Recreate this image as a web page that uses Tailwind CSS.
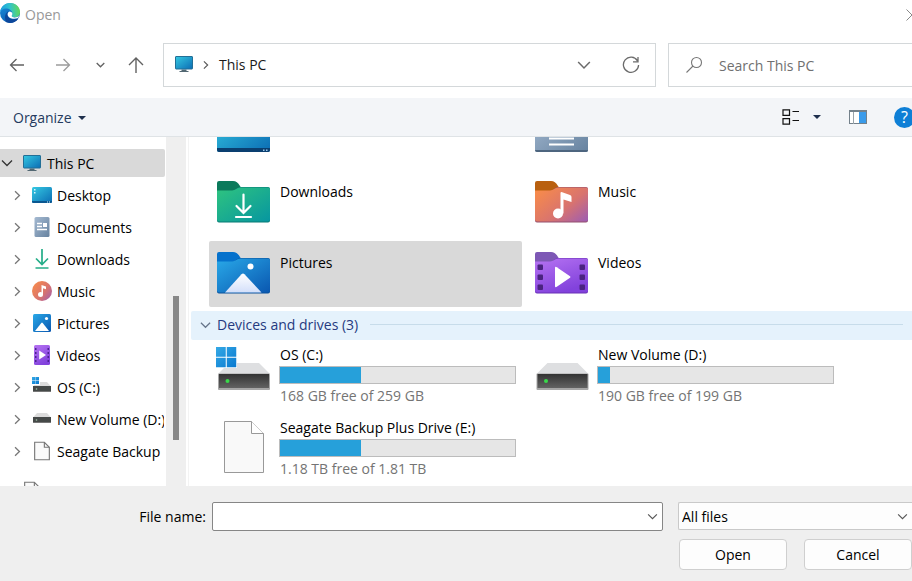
<!DOCTYPE html>
<html lang="en">
<head>
<meta charset="utf-8">
<meta name="viewport" content="width=device-width, initial-scale=1">
<title>Open</title>
<script src="https://cdn.jsdelivr.net/npm/@tailwindcss/browser@4"></script>
</head>
<body class="flex h-screen flex-col overflow-hidden bg-white font-['Open_Sans','Noto_Sans',sans-serif] text-sm text-black">

<!-- Shared icon definitions -->
<svg class="absolute size-0" aria-hidden="true">
  <defs>
    <linearGradient id="gScreen" x1="0" y1="0" x2="1" y2="1"><stop offset="0" stop-color="#35c9e2"/><stop offset="1" stop-color="#0b6cb4"/></linearGradient>
    <linearGradient id="gBlue" x1="0" y1="0" x2="1" y2="1"><stop offset="0" stop-color="#29a9e8"/><stop offset="1" stop-color="#0a57b0"/></linearGradient>
    <linearGradient id="gGreen" x1="0" y1="0" x2="1" y2="1"><stop offset="0" stop-color="#2fc47f"/><stop offset="1" stop-color="#0796a0"/></linearGradient>
    <linearGradient id="gMusic" x1="0" y1="0.2" x2="1" y2="1"><stop offset="0" stop-color="#f68a4c"/><stop offset="0.55" stop-color="#d8736f"/><stop offset="1" stop-color="#9c5cb4"/></linearGradient>
    <linearGradient id="gVideo" x1="0" y1="0" x2="0.5" y2="1"><stop offset="0" stop-color="#b673f2"/><stop offset="1" stop-color="#8242dc"/></linearGradient>
    <linearGradient id="gDoc" x1="0" y1="0" x2="1" y2="1"><stop offset="0" stop-color="#a5bad2"/><stop offset="1" stop-color="#66829f"/></linearGradient>
    <linearGradient id="gHill" x1="0" y1="0" x2="0" y2="1"><stop offset="0" stop-color="#ffffff"/><stop offset="1" stop-color="#d3dffa"/></linearGradient>
    <linearGradient id="gDrive" x1="0" y1="0" x2="0" y2="1"><stop offset="0" stop-color="#333333"/><stop offset="1" stop-color="#626262"/></linearGradient>
    <linearGradient id="gWin" x1="0" y1="0" x2="1" y2="1"><stop offset="0" stop-color="#35a9e6"/><stop offset="1" stop-color="#0878cf"/></linearGradient>
    <linearGradient id="gEdgeTop" x1="0" y1="0.6" x2="1" y2="0.5"><stop offset="0" stop-color="#1a9be0"/><stop offset="0.5" stop-color="#2fc2cf"/><stop offset="1" stop-color="#63d957"/></linearGradient>
    <linearGradient id="gEdgeLow" x1="0" y1="0" x2="0.6" y2="1"><stop offset="0" stop-color="#1a8fdc"/><stop offset="1" stop-color="#0c5cb0"/></linearGradient>
    <symbol id="chevRight" viewBox="0 0 8 12"><path d="M1.2 1.2 6.2 6 1.2 10.8" fill="none" stroke="currentColor" stroke-width="1.5"/></symbol>
    <symbol id="chevDown" viewBox="0 0 12 8"><path d="M1 1.5 6 6.5 11 1.5" fill="none" stroke="currentColor" stroke-width="1.3"/></symbol>
    <symbol id="monitor" viewBox="0 0 18 16"><path d="M6.500 13.500h5v1.500h2v1h-9v-1h2z" fill="#536873"/><rect x="0.500" y="0.500" width="17" height="12.500" rx="0.500" fill="url(#gScreen)" stroke="#236f96"/></symbol>
    <symbol id="drive" viewBox="0 0 52 27"><path d="M11 0h30l11 11H0z" fill="#dedfe1"/><rect y="10.500" width="52" height="16.500" rx="1" fill="#a6a6a6"/><rect x="1" y="11" width="50" height="14" fill="url(#gDrive)"/><circle cx="9.500" cy="18" r="2" fill="#38d94a"/></symbol>
    <symbol id="smallDrive" viewBox="0 0 18 11"><path d="M4 0h10l4 4.500H0z" fill="#dcdcdc"/><rect y="4" width="18" height="6" fill="#454948"/><rect y="9" width="18" height="1" fill="#777"/><circle cx="3.500" cy="7" r="0.800" fill="#a7c7ad"/></symbol>
    <symbol id="windows" viewBox="0 0 20 20"><path d="M0 0h9.500v9.500H0zM10.500 0H20v9.500h-9.500zM0 10.500h9.500V20H0zM10.500 10.500H20V20h-9.500z" fill="url(#gWin)"/></symbol>
    <symbol id="page" viewBox="0 0 40 52"><path d="M.5.5h27l12 12v39H.5z" fill="#f9f9f9" stroke="#999"/><path d="M27.500.5v12h12" fill="#fff" stroke="#999"/></symbol>
    <symbol id="smallPage" viewBox="0 0 17 20"><path d="M.7.7h10.300l5.300 5.300v13.300H.7z" fill="#fafafa" stroke="#777" stroke-width="1.200"/><path d="M11 .7V6h5.300" fill="none" stroke="#777" stroke-width="1.200"/></symbol>
  </defs>
</svg>

<header>
  <div class="flex h-[30px] items-center justify-between overflow-hidden">
    <div class="flex items-center gap-[5px] text-[#999]">
      <svg class="mb-1 size-5" viewBox="0 0 20 20" aria-hidden="true">
        <circle cx="10" cy="10" r="10" fill="url(#gEdgeLow)"/>
        <path d="M0 9.500C.5 4 5 0 10 0c6 0 10 4 10 9 0 3.300-2.300 5.300-5.300 5.300-2 0-3-.6-3-1.300 0-.6.700-1 .700-2.300C12.400 7.500 9 5.500 6 5.500 3 5.500.8 7.300 0 9.500z" fill="url(#gEdgeTop)"/>
        <path d="M6.500 19.300C4 16 4.500 10 8.800 8c-1.200 1-1.500 2.500-1.300 4 .5 3.500 5 5.500 10.800 3.500-2.300 4-7 5.500-11.800 3.800z" fill="#0c479b"/>
        <path d="M9.500 8.500c1.600 0 2.900 1 2.900 2.200 0 1.300-.7 1.700-.7 2.300 0 .9 1.300 1.400 3 1.400 1.700 0 3.200-.5 4.300-1.700-.2.900-.5 1.700-.9 2.400-4.800 1.800-9.800.2-10.400-3.300-.2-1.400.5-2.800 1.800-3.300z" fill="#fff"/>
      </svg>
      <h1>Open</h1>
    </div>
    <button class="-mr-[6px] text-[#888]" aria-label="Close">
      <svg class="size-3" viewBox="0 0 12 12" fill="none" stroke="currentColor"><path d="M.5.500 11.500 11.500M11.500.5.5 11.500"/></svg>
    </button>
  </div>

  <div class="flex items-center pt-[13px] pb-[11px]">
    <nav class="flex w-[163px] shrink-0 items-center text-[#626262]" aria-label="History">
      <button class="flex w-[34px] justify-center" aria-label="Back"><svg class="h-3.5 w-4" viewBox="0 0 16 14" fill="none" stroke="currentColor" stroke-width="1.300"><path d="M15 7H1.500M7.500 1 1.500 7l6 6"/></svg></button>
      <button class="flex w-[58px] justify-center text-[#9c9c9c]" aria-label="Forward"><svg class="h-3.5 w-4" viewBox="0 0 16 14" fill="none" stroke="currentColor" stroke-width="1.300"><path d="M1 7h13.500M8.500 1l6 6-6 6"/></svg></button>
      <button class="flex w-4 justify-center" aria-label="Recent locations"><svg class="h-1.5 w-[9px]" viewBox="0 0 9 6"><path d="M.7 1 4.500 4.800 8.300 1" fill="none" stroke="currentColor" stroke-width="1.300"/></svg></button>
      <button class="flex w-[55px] justify-center" aria-label="Up"><svg class="size-4" viewBox="0 0 16 16" fill="none" stroke="currentColor" stroke-width="1.400"><path d="M8 16V1M1 8l7-7 7 7"/></svg></button>
    </nav>
    <div class="flex h-11 flex-1 items-center border border-[#d4d8da] pr-[15px] pl-[11px]">
      <svg class="mb-[2px] h-4 w-[18px]" aria-hidden="true"><use href="#monitor"/></svg>
      <svg class="mx-2.5 h-2.5 w-1.5 text-[#555]" aria-hidden="true"><use href="#chevRight"/></svg>
      <button class="flex-1 text-left text-[#1a1a1a]">This PC</button>
      <button class="mr-[31px] text-[#6b6b6b]" aria-label="Previous locations"><svg class="h-2.5 w-3.5"><use href="#chevDown"/></svg></button>
      <button class="text-[#6b6b6b]" aria-label="Refresh"><svg class="size-[18px]" viewBox="0 0 18 18" fill="none" stroke="currentColor" stroke-width="1.300"><path d="M15.500 4.800A7.600 7.600 0 1 0 16.600 9M16 1v4.800h-5"/></svg></button>
    </div>
    <label class="ml-3 flex h-11 w-[244px] shrink-0 items-center gap-4 border border-r-0 border-[#d4d8da] pl-4 text-[#777]">
      <svg class="size-[18px] shrink-0" viewBox="0 0 18 18" fill="none" stroke="currentColor" stroke-width="1.100" aria-hidden="true"><circle cx="11.500" cy="6.500" r="5"/><path d="M8 10 1.500 16.500"/></svg>
      <input class="w-full min-w-0 pt-0.5 outline-none placeholder:text-[#707070]" type="search" placeholder="Search This PC" aria-label="Search This PC">
    </label>
  </div>

  <div class="flex h-[39px] items-center overflow-hidden border-b border-[#dfe3e6] bg-[#f3f5f8] pl-[13px]">
    <button class="flex items-center gap-1.5 pt-0.5 text-[#243a5e]">Organize <svg class="h-1 w-2" viewBox="0 0 8 4"><path d="M0 0h8L4 4z" fill="#1e2f4d"/></svg></button>
    <div class="-mr-[3px] ml-auto flex items-center">
      <button class="flex items-center gap-3.5" aria-label="Change view">
        <svg class="h-4 w-[17px]" viewBox="0 0 17 16" fill="none" stroke="#111" stroke-width="1.200"><path d="M1 .8h6.500v5.600H1zM1 9.600h6.500v5.600H1zM10.500 2.500H17M10.500 11.500H17"/></svg>
        <svg class="h-1 w-2" viewBox="0 0 8 4"><path d="M0 0h8L4 4z" fill="#1e2f4d"/></svg>
      </button>
      <button class="ml-7" aria-label="Show the preview pane">
        <svg class="h-3.5 w-[18px]" viewBox="0 0 18 14"><rect x=".5" y=".5" width="17" height="13" fill="#fff" stroke="#74818b"/><path d="M0 0h18v2H0z" fill="#74818b"/><path d="M4.500 2v12" stroke="#9aa4ab"/><path d="M10 2h7v11h-7z" fill="#3a9bea"/></svg>
      </button>
      <button class="ml-[27px] flex size-[21px] items-center justify-center rounded-full bg-[#0e7fd6] text-base leading-none text-white" aria-label="Help">?</button>
    </div>
  </div>
</header>

<main class="flex min-h-0 flex-1">
  <nav class="w-[166px] shrink-0 overflow-hidden pt-3" aria-label="Folders">
    <ul class="flex flex-col gap-1 whitespace-nowrap">
      <li><a href="#" class="mr-px flex h-7 items-center rounded-r-xs bg-[#d9d9d9] pl-[1px]"><svg class="mr-[10px] h-2 w-3 text-[#333]"><use href="#chevDown"/></svg><svg class="mr-1.5 h-4 w-[18px]"><use href="#monitor"/></svg><span class="pt-0.5">This PC</span></a></li>
      <li><a href="#" class="flex h-7 items-center pl-3.5"><svg class="mr-[11px] h-[11px] w-[7px] shrink-0 text-[#777]"><use href="#chevRight"/></svg><svg class="mr-[5px] size-5 shrink-0" viewBox="0 0 20 20"><rect y="2" width="20" height="16" rx="1.500" fill="url(#gScreen)"/><path d="M0 16h20v.5a1.500 1.500 0 0 1-1.500 1.500h-17A1.500 1.500 0 0 1 0 16.500z" fill="#0a5790"/><path d="M2 4h1.500v1.500H2zM2 7h1.500v1.500H2zM15 16.500h1v1h-1zM17 16.500h1v1h-1z" fill="#d9f6fb"/></svg><span class="pt-0.5">Desktop</span></a></li>
      <li><a href="#" class="flex h-7 items-center pl-3.5"><svg class="mr-[11px] h-[11px] w-[7px] shrink-0 text-[#777]"><use href="#chevRight"/></svg><svg class="mr-[5px] size-5 shrink-0" viewBox="0 0 20 20"><rect x="2.500" width="15" height="20" rx="1.500" fill="url(#gDoc)"/><path d="M5 6.500h5M5 9.500h5M5 12.500h10" stroke="#fff" stroke-width="1.300"/><path d="M11 6h4v4h-4z" fill="#fff"/></svg><span class="pt-0.5">Documents</span></a></li>
      <li><a href="#" class="flex h-7 items-center pl-3.5"><svg class="mr-[11px] h-[11px] w-[7px] shrink-0 text-[#777]"><use href="#chevRight"/></svg><svg class="mr-[5px] size-5 shrink-0" viewBox="0 0 20 20" fill="none" stroke="#24ad88" stroke-width="1.700"><path d="M10 0v15M4 9.500l6 6 6-6M3.500 19h13"/></svg><span class="pt-0.5">Downloads</span></a></li>
      <li><a href="#" class="flex h-7 items-center pl-3.5"><svg class="mr-[11px] h-[11px] w-[7px] shrink-0 text-[#777]"><use href="#chevRight"/></svg><svg class="mr-[5px] size-5 shrink-0" viewBox="0 0 20 20"><circle cx="10" cy="10" r="10" fill="url(#gMusic)"/><circle cx="8.500" cy="13.500" r="2.500" fill="#fff"/><path d="M9.500 4v9.500H11V7.200l3 1V5.500z" fill="#fff"/></svg><span class="pt-0.5">Music</span></a></li>
      <li><a href="#" class="flex h-7 items-center pl-3.5"><svg class="mr-[11px] h-[11px] w-[7px] shrink-0 text-[#777]"><use href="#chevRight"/></svg><svg class="mr-[5px] size-5 shrink-0" viewBox="0 0 20 20"><rect x="1" y="1" width="18" height="18" rx="1.500" fill="url(#gBlue)"/><path d="M3 18 9.300 10q.7-.8 1.400 0L17 18z" fill="#fff"/><circle cx="14.500" cy="5.500" r="1.600" fill="#fff"/></svg><span class="pt-0.5">Pictures</span></a></li>
      <li><a href="#" class="flex h-7 items-center pl-3.5"><svg class="mr-[11px] h-[11px] w-[7px] shrink-0 text-[#777]"><use href="#chevRight"/></svg><svg class="mr-[5px] size-5 shrink-0" viewBox="0 0 20 20"><rect x="2" width="16" height="20" rx="1.500" fill="url(#gVideo)"/><path d="M3 3h1.500v2H3zM3 7h1.500v2H3zM3 11h1.500v2H3zM3 15h1.500v2H3zM15.500 3H17v2h-1.500zM15.500 7H17v2h-1.500zM15.500 11H17v2h-1.500zM15.500 15H17v2h-1.500z" fill="#4b2290"/><path d="M7.200 5.500v9L14 10z" fill="#fff"/></svg><span class="pt-0.5">Videos</span></a></li>
      <li><a href="#" class="flex h-7 items-center pl-3.5"><svg class="mr-[11px] h-[11px] w-[7px] shrink-0 text-[#777]"><use href="#chevRight"/></svg><svg class="mr-[5px] size-5 shrink-0" viewBox="0 0 20 20"><use href="#smallDrive" x="1" y="5" width="18" height="11"/><path d="M-1-1h9v9h-9z" fill="#fff"/><use href="#windows" x="0" y="0" width="7" height="7"/></svg><span class="pt-0.5">OS (C:)</span></a></li>
      <li><a href="#" class="mr-0.5 flex h-7 items-center overflow-hidden pl-3.5"><svg class="mr-[11px] h-[11px] w-[7px] shrink-0 text-[#777]"><use href="#chevRight"/></svg><svg class="mr-[5px] size-5 shrink-0" viewBox="0 0 20 20"><use href="#smallDrive" x="1" y="4" width="18" height="11"/></svg><span class="pt-0.5">New Volume (D:)</span></a></li>
      <li><a href="#" class="flex h-7 items-center pl-3.5"><svg class="mr-[11px] h-[11px] w-[7px] shrink-0 text-[#777]"><use href="#chevRight"/></svg><svg class="mr-[5px] size-5 shrink-0" viewBox="0 0 20 20"><use href="#smallPage" x="2" y="0" width="16" height="20"/></svg><span class="pt-0.5">Seagate Backup</span></a></li>
      <li class="mt-2 pt-1 pl-6"><svg class="h-5 w-4" aria-hidden="true"><use href="#smallPage"/></svg></li>
    </ul>
  </nav>
  <div class="flex w-5 shrink-0 justify-center bg-[#efefef] pt-[159px]" aria-hidden="true"><div class="h-36 w-1.5 bg-[#888]"></div></div>

  <section class="ml-[2px] flex min-w-0 flex-1 flex-col justify-end overflow-hidden border-l border-[#f3f3f3] pl-[2px]">
    <div class="ml-[18px] grid grid-cols-[313px_313px] gap-x-[5px] gap-y-[5px] leading-[22px]">
      <div class="h-[66px] px-2 pt-[11px]"><svg class="h-[43px] w-[53px]" viewBox="0 0 53 43" aria-hidden="true"><rect width="53" height="42" rx="2" fill="url(#gScreen)"/><path d="M0 38h53v2a2 2 0 0 1-2 2H2a2 2 0 0 1-2-2z" fill="#0a3f70"/><path d="M46 39.500h1.500V41H46zM49 39.500h1.500V41H49z" fill="#9cc8ea"/></svg></div>
      <div class="h-[66px] px-2 pt-[11px]"><svg class="h-[43px] w-[53px]" viewBox="0 0 53 43" aria-hidden="true"><rect width="53" height="42" rx="2" fill="url(#gDoc)"/><path d="M0 40h53a2 2 0 0 1-2 2H2a2 2 0 0 1-2-2z" fill="#4d657f"/><path d="M14 28.500h25M14 34.500h25" stroke="#fff" stroke-width="2.200"/></svg></div>

      <a href="#" class="flex h-[66px] gap-2.5 px-2 pt-[11px]">
        <svg class="h-[42px] w-[53px]" viewBox="0 0 53 42" aria-hidden="true"><path d="M0 2a2 2 0 0 1 2-2h14c3 0 5 1.500 7 5l2 3v4H0z" fill="#0b7a5b"/><path d="M0 10h15c3 0 5-4 8-4h28a2 2 0 0 1 2 2v31.500a2 2 0 0 1-2 2H2a2 2 0 0 1-2-2z" fill="#077a74"/><path d="M0 9.500h15c3.500 0 5-3 8-3h28a2 2 0 0 1 2 2v30a2 2 0 0 1-2 2H2a2 2 0 0 1-2-2z" fill="url(#gGreen)"/><path d="M26.500 13.500v18M19.500 25l7 7 7-7M19 36h15" fill="none" stroke="#fff" stroke-width="2.200" stroke-linecap="round"/></svg>
        <span>Downloads</span>
      </a>
      <a href="#" class="flex h-[66px] gap-2.5 px-2 pt-[11px]">
        <svg class="h-[42px] w-[53px]" viewBox="0 0 53 42" aria-hidden="true"><path d="M0 2a2 2 0 0 1 2-2h14c3 0 5 1.500 7 5l2 3v4H0z" fill="#b9600f"/><path d="M0 10h15c3 0 5-4 8-4h28a2 2 0 0 1 2 2v31.500a2 2 0 0 1-2 2H2a2 2 0 0 1-2-2z" fill="#94506e"/><path d="M0 9.500h15c3.500 0 5-3 8-3h28a2 2 0 0 1 2 2v30a2 2 0 0 1-2 2H2a2 2 0 0 1-2-2z" fill="url(#gMusic)"/><circle cx="23" cy="32.500" r="5" fill="#fff"/><path d="M25.500 12q0-1 1-1l8.500 3q1.500.5 1.500 2v5l-8-2.500v14h-3z" fill="#fff"/></svg>
        <span>Music</span>
      </a>
      <a href="#" class="flex h-[66px] gap-2.5 rounded-xs bg-[#d9d9d9] px-2 pt-[11px]">
        <svg class="h-[42px] w-[53px]" viewBox="0 0 53 42" aria-hidden="true"><path d="M0 2a2 2 0 0 1 2-2h14c3 0 5 1.500 7 5l2 3v4H0z" fill="#0571cc"/><path d="M0 10h15c3 0 5-4 8-4h28a2 2 0 0 1 2 2v31.500a2 2 0 0 1-2 2H2a2 2 0 0 1-2-2z" fill="#08509b"/><path d="M0 9.500h15c3.500 0 5-3 8-3h28a2 2 0 0 1 2 2v30a2 2 0 0 1-2 2H2a2 2 0 0 1-2-2z" fill="url(#gBlue)"/><path d="M8 40.500 24.500 22.300q1.500-1.500 3 0L44.500 40.500z" fill="url(#gHill)"/><circle cx="33.500" cy="14.500" r="3" fill="#fff"/></svg>
        <span>Pictures</span>
      </a>
      <a href="#" class="flex h-[66px] gap-2.5 px-2 pt-[11px]">
        <svg class="h-[42px] w-[53px]" viewBox="0 0 53 42" aria-hidden="true"><path d="M0 2a2 2 0 0 1 2-2h14c3 0 5 1.500 7 5l2 3v4H0z" fill="#7d58b5"/><path d="M0 10h15c3 0 5-4 8-4h28a2 2 0 0 1 2 2v31.500a2 2 0 0 1-2 2H2a2 2 0 0 1-2-2z" fill="#6930b5"/><path d="M0 9.500h15c3.500 0 5-3 8-3h28a2 2 0 0 1 2 2v30a2 2 0 0 1-2 2H2a2 2 0 0 1-2-2z" fill="url(#gVideo)"/><g fill="#4a2380"><rect x="2.500" y="12.500" width="5.500" height="5.500" rx="1"/><rect x="2.500" y="22.500" width="5.500" height="5.500" rx="1"/><rect x="2.500" y="32.500" width="5.500" height="5.500" rx="1"/><rect x="44.500" y="12.500" width="5.500" height="5.500" rx="1"/><rect x="44.500" y="22.500" width="5.500" height="5.500" rx="1"/><rect x="44.500" y="32.500" width="5.500" height="5.500" rx="1"/></g><path d="M20 16q0-2 1.800-.8L35 24.200q1 .8 0 1.600L21.800 34.800Q20 36 20 34z" fill="#fff"/></svg>
        <span>Videos</span>
      </a>
    </div>

    <h2 class="mt-1 flex h-[29px] shrink-0 items-center rounded-l-xs bg-[#e5f2fc] pr-[9px] pb-0.5 pl-[9px] text-[#263a80]">
      <svg class="mr-1.5 h-2 w-[11px] text-[#66758a]" aria-hidden="true"><use href="#chevDown"/></svg>
      Devices and drives (3)
      <span class="ml-3 h-px flex-1 bg-[#c7dcea]"></span>
    </h2>

    <div class="mt-1 mb-[5px] ml-[18px] grid grid-cols-[313px_313px] gap-x-[5px] gap-y-[9px]">
      <a href="#" class="flex h-16 pr-1.5 pl-[7px]">
        <svg class="mt-[3px] mr-[9px] h-[44px] w-[54px] shrink-0" viewBox="0 0 54 44" aria-hidden="true"><use href="#drive" x="2" y="16" width="52" height="27"/><path d="M0 0h21v21H0z" fill="#fff"/><use href="#windows" x="0" y="0" width="20.500" height="20.500"/></svg>
        <span class="flex flex-1 flex-col leading-[22px]">
          <span class="pl-px">OS (C:)</span>
          <span class="flex h-[18px] border border-[#bcbcbc] bg-[#e6e6e6]"><span class="bg-[#26a0da]" style="width:34.500%"></span></span>
          <span class="pt-px pl-px text-[#747474]">168 GB free of 259 GB</span>
        </span>
      </a>
      <a href="#" class="flex h-16 pr-1.5 pl-[9px]">
        <svg class="mt-[19px] mr-2 h-[27px] w-[53px] shrink-0" aria-hidden="true"><use href="#drive"/></svg>
        <span class="flex flex-1 flex-col leading-[22px]">
          <span class="pl-px">New Volume (D:)</span>
          <span class="flex h-[18px] border border-[#bcbcbc] bg-[#e6e6e6]"><span class="bg-[#26a0da]" style="width:5%"></span></span>
          <span class="pt-px pl-px text-[#747474]">190 GB free of 199 GB</span>
        </span>
      </a>
      <a href="#" class="flex h-16 pr-1.5 pl-[15px]">
        <svg class="mt-1 mr-[15px] h-[52px] w-10 shrink-0" aria-hidden="true"><use href="#page"/></svg>
        <span class="flex flex-1 flex-col leading-[22px]">
          <span class="pl-px">Seagate Backup Plus Drive (E:)</span>
          <span class="flex h-[18px] border border-[#bcbcbc] bg-[#e6e6e6]"><span class="bg-[#26a0da]" style="width:34.500%"></span></span>
          <span class="pt-px pl-px text-[#747474]">1.18 TB free of 1.81 TB</span>
        </span>
      </a>
    </div>
  </section>
</main>

<footer class="bg-[#efefef] pt-4 pb-[11px]">
  <div class="flex items-start">
    <label for="filename" class="w-[212px] shrink-0 pr-1.5 text-right leading-[29px]">File name:</label>
    <div class="flex h-[29px] flex-1 items-center rounded-xs border border-[#868686] bg-white pr-1">
      <input id="filename" type="text" class="min-w-0 flex-1 px-1 outline-none">
      <button class="text-[#555]" aria-label="Recent file names"><svg class="h-[7px] w-[11px]"><use href="#chevDown"/></svg></button>
    </div>
    <div class="relative ml-[15px] w-[234px] shrink-0">
      <select aria-label="File type" class="h-7 w-full appearance-none rounded-l-xs border border-r-0 border-[#c9c9c9] bg-[#fdfdfd] pt-0.5 pl-[3px]"><option>All files</option></select>
      <svg class="pointer-events-none absolute top-[11px] right-1 h-[7px] w-[11px] text-[#555]" aria-hidden="true"><use href="#chevDown"/></svg>
    </div>
  </div>
  <div class="mt-2 flex justify-end gap-[17px]">
    <button class="h-[31px] w-[108px] rounded-sm border border-[#cfcfcf] bg-[#fdfdfd]">Open</button>
    <button class="h-[31px] w-[108px] rounded-sm border border-[#cfcfcf] bg-[#fdfdfd]">Cancel</button>
  </div>
</footer>
</body>
</html>
